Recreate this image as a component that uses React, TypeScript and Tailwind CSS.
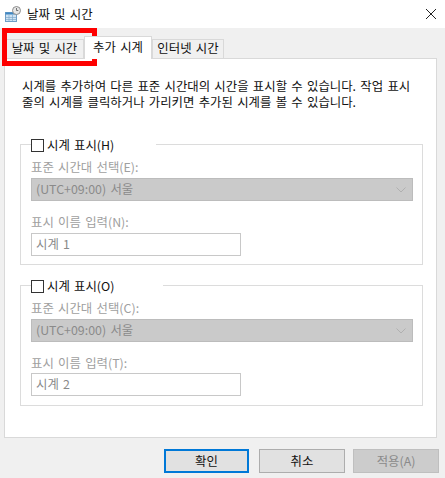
const font = { fontFamily: '"Noto Sans CJK KR", "Liberation Sans", sans-serif' };

function Group({ legend, mt, label1, label2, value, legendW, inputMt }: { legend: string; mt: string; label1: string; label2: string; value: string; legendW: string; inputMt: string }) {
  return (
    <div className={`${mt} ml-[15px] mr-[13px] h-[121px] border border-[#dcdcdc] pl-[10px] pr-[9px]`}>
      <div className={`-mt-[7px] flex h-[14px] ${legendW} items-center gap-[3px] bg-white text-[#111]`}>
        <span className="h-[13px] w-[13px] shrink-0 border border-[#333] bg-white" />
        <span className="whitespace-nowrap">{legend}</span>
      </div>
      <div className="mt-[6px] h-[18px] leading-[18px] text-[#a0a0a0] whitespace-nowrap">{label1}</div>
      <div className="mt-[2px] flex h-[23px] items-center justify-between border border-[#bcbcbc] bg-[#cacaca] pl-[4px] pr-[6px] text-[#8a8a8a]">
        <span>(UTC+09:00) 서울</span>
        <svg width="10" height="6" viewBox="0 0 10 6" fill="none" stroke="#b0b0b0"><path d="M0.5 0.5 L5 5 L9.5 0.5" /></svg>
      </div>
      <div className="mt-[12px] h-[18px] leading-[18px] text-[#a0a0a0] whitespace-nowrap">{label2}</div>
      <div className={`${inputMt} flex h-[23px] w-[210px] items-center border border-[#c8c8c8] bg-white pb-[1px] pl-[4px] text-[#8a8a8a]`}>{value}</div>
    </div>
  );
}

function Tab({ children, active, w }: { children: string; active?: boolean; w: string }) {
  return active ? (
    <div className={`relative z-10 -mb-px flex h-[23px] ${w} items-center justify-center border border-b-0 border-[#d9d9d9] bg-white pb-[2px] text-[#111]`}>{children}</div>
  ) : (
    <div className={`flex h-[19px] ${w} items-center justify-center border border-b-0 border-[#d9d9d9] bg-[#f0f0f0] pb-[1px] text-[#111]`}>{children}</div>
  );
}

function Btn({ children, kind, w }: { children: string; kind: "ok" | "normal" | "off"; w: string }) {
  const c =
    kind === "ok"
      ? "border-2 border-[#0078d7] bg-[#e1e1e1] text-[#111]"
      : kind === "normal"
        ? "border border-[#adadad] bg-[#e1e1e1] text-[#111]"
        : "border border-[#bfbfbf] bg-[#cccccc] text-[#8a8a8a]";
  return <div className={`flex h-[24px] ${w} items-center justify-center ${c}`}>{children}</div>;
}

export default function App() {
  return (
    <div className="relative flex h-[478px] w-[445px] flex-col overflow-hidden bg-[#f0f0f0] text-[12.4px] [word-spacing:1.5px]" style={font}>
      <div className="flex h-[28px] items-center justify-between bg-white pl-[5px] pr-[9px]">
        <div className="flex items-center gap-[6px]">
          <svg width="16" height="18" viewBox="0 0 16 18">
            <rect x="0.5" y="7.5" width="11" height="9" fill="#cfe3f3" stroke="#6f9ec6" />
            <rect x="0.5" y="7.5" width="11" height="2" fill="#3f86c2" />
            <path d="M4 10v6M7.5 10v6M1 12.5h10M1 14.5h10" stroke="#7fa9cc" strokeWidth="0.7" />
            <circle cx="11.5" cy="5.5" r="4" fill="#e6e6e6" stroke="#8d8d8d" />
            <path d="M11.5 3v2.5h1.8" stroke="#555" fill="none" strokeWidth="0.8" />
          </svg>
          <span className="text-[#111]">날짜 및 시간</span>
        </div>
        <svg width="10" height="10" viewBox="0 0 10 10" stroke="#222" strokeWidth="1"><path d="M0 0L10 10M10 0L0 10" /></svg>
      </div>

      <div className="mt-[8px] flex items-end pl-[5px]">
        <Tab w="w-[79px]">날짜 및 시간</Tab>
        <Tab active w="w-[68px]">추가 시계</Tab>
        <Tab w="w-[72px]">인터넷 시간</Tab>
      </div>

      <div className="ml-[4px] flex h-[380px] w-[433px] flex-col border border-[#d9d9d9] bg-white">
        <p className="mx-[17px] mt-[19px] whitespace-nowrap leading-[16px] text-[#111]">
          시계를 추가하여 다른 표준 시간대의 시간을 표시할 수 있습니다. 작업 표시
          <br />
          줄의 시계를 클릭하거나 가리키면 추가된 시계를 볼 수 있습니다.
        </p>
        <Group mt="mt-[34px]" inputMt="mt-[2px]" legend="시계 표시(H)" label1="표준 시간대 선택(E):" label2="표시 이름 입력(N):" value="시계 1" legendW="w-[125px]" />
        <Group mt="mt-[20px]" inputMt="mt-[1px]" legend="시계 표시(O)" label1="표준 시간대 선택(C):" label2="표시 이름 입력(T):" value="시계 2" legendW="w-[132px]" />
      </div>

      <div className="mt-[11px] flex justify-end pr-[6px]">
        <Btn kind="ok" w="w-[85px]">확인</Btn>
        <div className="w-[10px]" />
        <Btn kind="normal" w="w-[86px]">취소</Btn>
        <div className="w-[8px]" />
        <Btn kind="off" w="w-[86px]">적용(A)</Btn>
      </div>

      <div className="absolute left-[2px] top-[28px] h-[38px] w-[95px] border-[5px] border-[#fe0000]" />
    </div>
  );
}
